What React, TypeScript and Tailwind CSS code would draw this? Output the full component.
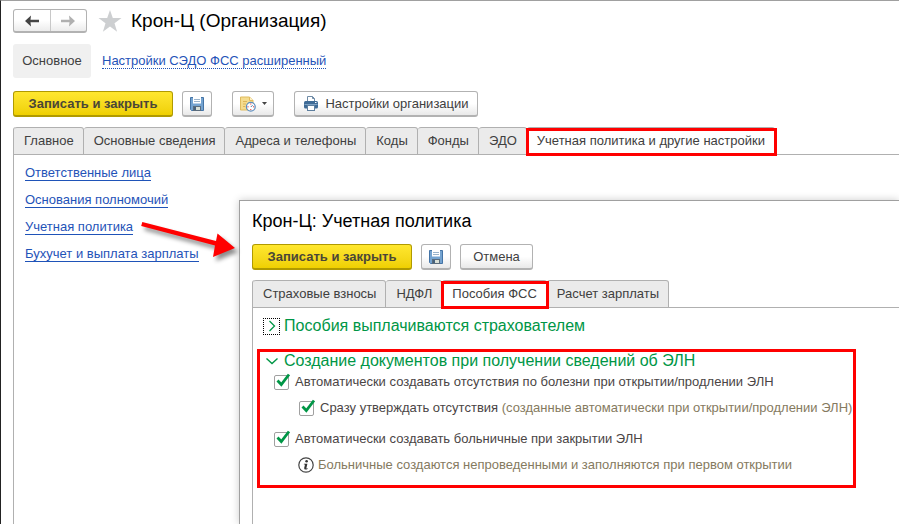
import { useState } from 'react';
import type { ReactNode } from 'react';

interface Tab {
  label: string;
  marked?: boolean;
}

const mainTabs: Tab[] = [
  { label: 'Главное' },
  { label: 'Основные сведения' },
  { label: 'Адреса и телефоны' },
  { label: 'Коды' },
  { label: 'Фонды' },
  { label: 'ЭДО' },
  { label: 'Учетная политика и другие настройки', marked: true },
];

const policyTabs: Tab[] = [
  { label: 'Страховые взносы' },
  { label: 'НДФЛ' },
  { label: 'Пособия ФСС', marked: true },
  { label: 'Расчет зарплаты' },
];

const links = [
  'Ответственные лица',
  'Основания полномочий',
  'Учетная политика',
  'Бухучет и выплата зарплаты',
];

function FloppyIcon() {
  return (
    <svg className="size-4" viewBox="0 0 16 16" aria-hidden="true">
      <path d="M1.5 1.5h13v13h-12l-1-1z" fill="#74a3d0" stroke="#4474a6" />
      <rect x="4" y="1" width="8" height="6.5" fill="#fff" />
      <path d="M5 3.500h6M5 5.500h6" stroke="#9ab3cb" />
      <rect x="4" y="10" width="8" height="5" fill="#5b6c7c" />
      <rect x="7" y="11" width="4" height="3" fill="#d9dfd6" />
      <rect x="5" y="11" width="2" height="3" fill="#46617c" />
    </svg>
  );
}

function ReportIcon() {
  return (
    <svg className="size-4" viewBox="0 0 16 16" aria-hidden="true">
      <path d="M.5 1h9l3.500 3.500v9.500H.5z" fill="#f5dc8e" stroke="#e0bb5e" />
      <path d="M9.500 1v3.500H13" fill="#fff3c9" stroke="#e0bb5e" />
      <path d="M3 5.500h4M3 8h3M3 10.500h2" stroke="#ddb65a" />
      <circle cx="10.800" cy="10.800" r="4.400" fill="#fff" stroke="#5f8fbe" strokeWidth="1.300" />
      <path d="M10.800 11l1.800-1.800" fill="none" stroke="#4878a8" />
      <path d="M10.300 8h1M10.300 13.600h1M8 10.300v1M13.600 10.300v1" stroke="#e02020" />
    </svg>
  );
}

function PrinterIcon() {
  return (
    <svg className="size-4" viewBox="0 0 16 16" aria-hidden="true">
      <path d="M4.500 6V.5h5l2 2V6" fill="#fff" stroke="#6f8ba6" />
      <path d="M9.500.5v2h2" fill="none" stroke="#6f8ba6" />
      <rect x="1" y="5" width="14" height="7.500" rx="1.500" fill="#3f6b96" />
      <path d="M1.500 8.500h13" stroke="#7fa3c4" />
      <rect x="12" y="6" width="1.500" height="1" fill="#fff" />
      <rect x="4.500" y="9.500" width="7" height="5" fill="#fff" stroke="#5d7e9e" />
    </svg>
  );
}

function InfoIcon() {
  return (
    <svg className="size-4" viewBox="0 0 16 16" aria-hidden="true">
      <circle cx="8" cy="8" r="7.200" fill="#fff" stroke="#444" strokeWidth="1.200" />
      <circle cx="8.600" cy="4.300" r="1.300" fill="#333" />
      <path d="M6 6.700h3.400l-1 4.300q-.1.700.5.500l.9-.3-.2.800q-1 .600-2.200.600-1.500 0-1.200-1.500L7 7.600H5.800z" fill="#333" />
    </svg>
  );
}

function PlainButton({ label, children, className }: { label?: string; children: ReactNode; className: string }) {
  return (
    <button
      type="button"
      aria-label={label}
      className={`flex h-[26px] items-center justify-center rounded-[3px] border border-b-2 border-[#b2b2b2] bg-linear-to-b from-white from-50% to-[#e9e9e9] text-[#404040] ${className}`}
    >
      {children}
    </button>
  );
}

function SaveAndCloseButton() {
  return (
    <button
      type="button"
      className="h-[26px] w-40 rounded-[3px] border border-b-2 border-[#b09a00] bg-linear-to-b from-[#ffe72e] to-[#efd000] font-bold text-[#4a4637]"
    >
      Записать и закрыть
    </button>
  );
}

function TabBar({ tabs }: { tabs: Tab[] }) {
  return (
    <div role="tablist" className="flex h-7 rounded-tl-[3px] border-b border-l border-[#b0b0b0]">
      {tabs.map((tab) => (
        <button
          key={tab.label}
          type="button"
          role="tab"
          aria-selected={!!tab.marked}
          className={`relative h-7 shrink-0 rounded-t-[3px] border-y border-r border-[#b0b0b0] pr-[9px] pl-[10px] text-[#404040] ${
            tab.marked ? 'bg-white' : 'bg-[#ebebeb]'
          }`}
        >
          {tab.label}
          {tab.marked && <span className="absolute top-0 -right-[3px] -bottom-[2px] -left-px z-10 border-3 border-[#ff0000]" />}
        </button>
      ))}
    </div>
  );
}

function Check({ id, children, className }: { id: string; children: ReactNode; className: string }) {
  const [checked, setChecked] = useState(true);

  return (
    <div className={`flex h-6 items-center gap-1.5 ${className}`}>
      <span className="relative size-[15px] shrink-0">
        <input
          id={id}
          type="checkbox"
          checked={checked}
          onChange={(e) => setChecked(e.target.checked)}
          className="block size-[15px] appearance-none rounded-[2px] border border-[#a0a0a0] bg-white"
        />
        {checked && (
          <svg className="pointer-events-none absolute -top-[2px] left-0 h-[17px] w-[17px]" viewBox="0 0 17 17" aria-hidden="true">
            <path d="M3.500 7.500l3.800 4L15 1.500" fill="none" stroke="#009646" strokeWidth="2.800" />
          </svg>
        )}
      </span>
      <label htmlFor={id} className="whitespace-nowrap">
        {children}
      </label>
    </div>
  );
}

function PolicyWindow() {
  return (
    <section className="absolute top-[199px] right-0 bottom-0 left-[238px] flex flex-col border-t border-l border-[#a0a0a0] bg-white pt-2 pl-3 shadow-[0_0_8px_rgba(0,0,0,0.2)]">
      <h2 className="text-lg leading-6 text-black">Крон-Ц: Учетная политика</h2>
      <div className="mt-[11px] flex">
        <SaveAndCloseButton />
        <PlainButton label="Записать" className="ml-[9px] w-[30px]">
          <FloppyIcon />
        </PlainButton>
        <PlainButton className="ml-[9px] w-[73px]">Отмена</PlainButton>
      </div>
      <div className="mt-[10px]">
        <TabBar tabs={policyTabs} />
      </div>
      <div className="flex-1 border-l border-[#b0b0b0] pt-1.5 pl-1">
        <h3 className="flex h-6 items-center pl-1.5 text-base text-[#009646]">
          <button type="button" aria-label="Развернуть" className="flex size-[17px] items-center justify-center border border-dotted border-black">
            <svg className="size-3" viewBox="0 0 12 12" aria-hidden="true">
              <path d="M3.500 1l5 5-5 5" fill="none" stroke="#009646" strokeWidth="1.300" />
            </svg>
          </button>
          <span className="ml-1">Пособия выплачиваются страхователем</span>
        </h3>
        <div className="mt-[11px] w-fit border-3 border-[#ff0000] pr-px pb-2 text-[#4a4545]">
          <h3 className="flex h-[18px] items-center pl-[3px] text-base text-[#009646]">
            <button type="button" aria-label="Свернуть" className="flex size-[17px] items-center justify-center">
              <svg className="size-3" viewBox="0 0 12 12" aria-hidden="true">
                <path d="M.5 3.500l5.500 5 5.500-5" fill="none" stroke="#009646" strokeWidth="1.400" />
              </svg>
            </button>
            <span className="ml-1">Создание документов при получении сведений об ЭЛН</span>
          </h3>
          <Check id="absence" className="pl-3.5">
            Автоматически создавать отсутствия по болезни при открытии/продлении ЭЛН
          </Check>
          <Check id="approve" className="mt-0.5 pl-[39px]">
            Сразу утверждать отсутствия{' '}
            <span className="text-[#857a60]">(созданные автоматически при открытии/продлении ЭЛН)</span>
          </Check>
          <Check id="sick" className="mt-[7px] pl-3.5">
            Автоматически создавать больничные при закрытии ЭЛН
          </Check>
          <p className="mt-0.5 flex h-6 items-center gap-1 pl-[38px] text-[#857a60]">
            <InfoIcon />
            Больничные создаются непроведенными и заполняются при первом открытии
          </p>
        </div>
      </div>
    </section>
  );
}

function Arrow() {
  return (
    <svg className="pointer-events-none absolute top-[214px] left-[134px] h-[50px] w-[110px]" viewBox="0 0 110 50" aria-hidden="true">
      <path
        d="M7.300 7L81 26L82.500 18.500L100 33L78 42L80 30.500L6.200 11z"
        fill="#ff0000"
        style={{ filter: 'drop-shadow(3px 4px 2px rgba(0,0,0,0.45))' }}
      />
    </svg>
  );
}

export default function App() {
  return (
    <main className="relative flex min-h-screen flex-col overflow-hidden border-t border-l border-t-[#a0a0a0] border-l-[#222] bg-white pt-2 pl-3 font-['Liberation_Sans',Arial,sans-serif] text-[13px]">
      <header className="flex items-center">
        <div className="flex h-6 w-[74px] rounded-[3px] border border-b-2 border-[#b2b2b2] bg-linear-to-b from-white from-50% to-[#ececec]">
          <button type="button" aria-label="Назад" className="flex flex-1 items-center justify-center border-r border-[#c8c8c8]">
            <svg className="h-3 w-3.5" viewBox="0 0 14 12" aria-hidden="true">
              <path d="M6 .5L5.500 4.700H14v2.600H5.500L6 11.500 0 6z" fill="#444" />
            </svg>
          </button>
          <button type="button" aria-label="Вперед" className="flex flex-1 items-center justify-center">
            <svg className="h-3 w-3.5" viewBox="0 0 14 12" aria-hidden="true">
              <path d="M8 .5l.500 4.200H0v2.600h8.500L8 11.500 14 6z" fill="#b0b0b0" />
            </svg>
          </button>
        </div>
        <svg className="ml-[11px] size-6" viewBox="0 0 24 24" aria-hidden="true">
          <path d="M12 1l2.800 8.100h8.700l-7 5.200 2.600 8.500-7.100-5.200-7.100 5.200 2.600-8.500-7-5.200h8.700z" fill="#cdcfd1" />
        </svg>
        <h1 className="ml-[9px] text-[19px] leading-6 text-black">Крон-Ц (Организация)</h1>
      </header>

      <nav className="mt-[11px] flex items-center gap-[11px]">
        <button type="button" className="h-[34px] w-[78px] rounded-[3px] bg-[#f0f0f0] text-[#404040]">
          Основное
        </button>
        <a href="#sedo" className="border-b border-dotted border-[#1f53b8] leading-[14px] text-[#1f53b8]">
          Настройки СЭДО ФСС расширенный
        </a>
      </nav>

      <div className="mt-[13px] flex">
        <SaveAndCloseButton />
        <PlainButton label="Записать" className="ml-[9px] w-[30px]">
          <FloppyIcon />
        </PlainButton>
        <PlainButton label="Отчеты" className="ml-5 w-[42px] gap-1.5">
          <ReportIcon />
          <svg className="h-[3px] w-[5px]" viewBox="0 0 5 3" aria-hidden="true">
            <path d="M0 0h5L2.500 3z" fill="#444" />
          </svg>
        </PlainButton>
        <PlainButton className="ml-5 w-[184px] gap-1.5">
          <PrinterIcon />
          Настройки организации
        </PlainButton>
      </div>

      <div className="mt-[10px]">
        <TabBar tabs={mainTabs} />
      </div>
      <ul className="flex-1 border-l border-[#b0b0b0] pt-[5px] pl-[11px]">
        {links.map((link) => (
          <li key={link} className="flex h-[27px] items-center">
            <a href="#section" className="border-b border-[#1f53b8] leading-[14px] text-[#1f53b8]">
              {link}
            </a>
          </li>
        ))}
      </ul>

      <PolicyWindow />
      <Arrow />
    </main>
  );
}
